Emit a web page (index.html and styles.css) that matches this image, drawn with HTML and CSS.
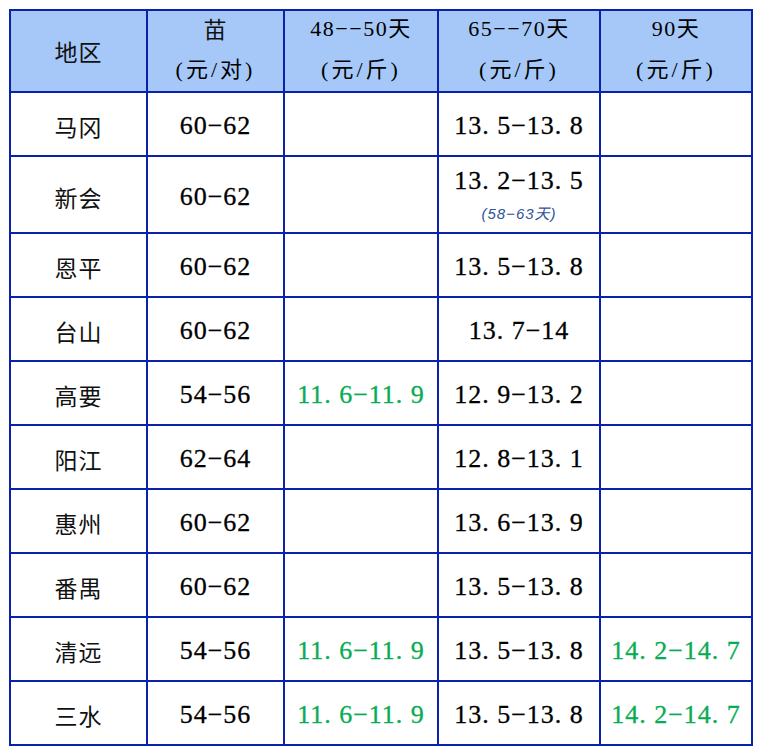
FILE: index.html
```html
<!DOCTYPE html>
<html lang="zh">
<head>
<meta charset="utf-8">
<title>价格表</title>
<link rel="stylesheet" href="styles.css">
</head>
<body>
<div class="grid">
  <div class="c hd"><span class="zh">地区</span></div>
  <div class="c hd"><span class="l1 zh">苗</span><span class="l2">(元/对)</span></div>
  <div class="c hd"><span class="l1">48−−50天</span><span class="l2">(元/斤)</span></div>
  <div class="c hd"><span class="l1">65−−70天</span><span class="l2">(元/斤)</span></div>
  <div class="c hd"><span class="l1">90天</span><span class="l2">(元/斤)</span></div>

  <div class="c zh">马冈</div><div class="c n">60−62</div><div class="c"></div><div class="c n">13. 5−13. 8</div><div class="c"></div>
  <div class="c zh">新会</div><div class="c n">60−62</div><div class="c"></div><div class="c n stack"><span>13. 2−13. 5</span><span class="note">(58−63天)</span></div><div class="c"></div>
  <div class="c zh">恩平</div><div class="c n">60−62</div><div class="c"></div><div class="c n">13. 5−13. 8</div><div class="c"></div>
  <div class="c zh">台山</div><div class="c n">60−62</div><div class="c"></div><div class="c n">13. 7−14</div><div class="c"></div>
  <div class="c zh">高要</div><div class="c n">54−56</div><div class="c n g">11. 6−11. 9</div><div class="c n">12. 9−13. 2</div><div class="c"></div>
  <div class="c zh">阳江</div><div class="c n">62−64</div><div class="c"></div><div class="c n">12. 8−13. 1</div><div class="c"></div>
  <div class="c zh">惠州</div><div class="c n">60−62</div><div class="c"></div><div class="c n">13. 6−13. 9</div><div class="c"></div>
  <div class="c zh">番禺</div><div class="c n">60−62</div><div class="c"></div><div class="c n">13. 5−13. 8</div><div class="c"></div>
  <div class="c zh">清远</div><div class="c n">54−56</div><div class="c n g">11. 6−11. 9</div><div class="c n">13. 5−13. 8</div><div class="c n g">14. 2−14. 7</div>
  <div class="c zh">三水</div><div class="c n">54−56</div><div class="c n g">11. 6−11. 9</div><div class="c n">13. 5−13. 8</div><div class="c n g">14. 2−14. 7</div>
</div>
</body>
</html>
```

FILE: styles.css
```css
html, body {
  margin: 0;
  padding: 0;
  background: #ffffff;
}
body {
  padding: 9px 0 0 9px;
  font-family: "Liberation Serif", "Noto Sans CJK SC", serif;
  color: #000000;
}
.grid {
  display: grid;
  width: 744px;
  box-sizing: border-box;
  padding: 2px;
  gap: 2px;
  background: #0a22aa;
  grid-template-columns: 135px 135px 152px 160px 150px;
  grid-template-rows: 80px 62px 75px repeat(8, 62px);
}
.c {
  background: #ffffff;
  display: flex;
  align-items: center;
  justify-content: center;
  white-space: nowrap;
  padding-top: 4px;
  box-sizing: border-box;
}
.hd {
  background: #a6c8f8;
  flex-direction: column;
  font-size: 22px;
  letter-spacing: 1.5px;
  line-height: 41px;
  padding-top: 0;
}
.hd .l1 { display: block; margin-top: -5px; }
.hd .l2 { display: block; letter-spacing: 3px; }
.zh {
  font-family: "Noto Sans CJK SC", sans-serif;
  font-size: 23px;
  letter-spacing: 1px;
  color: #111111;
}
.hd .zh { font-size: 23px; }
.n {
  font-size: 26px;
  letter-spacing: 1px;
  -webkit-text-stroke: 0.3px currentColor;
}
.g { color: #08ac52; }
.stack {
  flex-direction: column;
  line-height: 30px;
  padding-top: 0;
}
.note {
  font-family: "Liberation Sans", "Noto Sans CJK SC", sans-serif;
  font-style: italic;
  font-size: 15px;
  letter-spacing: 1px;
  color: #2f5597;
  line-height: 20px;
  margin-top: 8px;
  -webkit-text-stroke: 0;
}
```
